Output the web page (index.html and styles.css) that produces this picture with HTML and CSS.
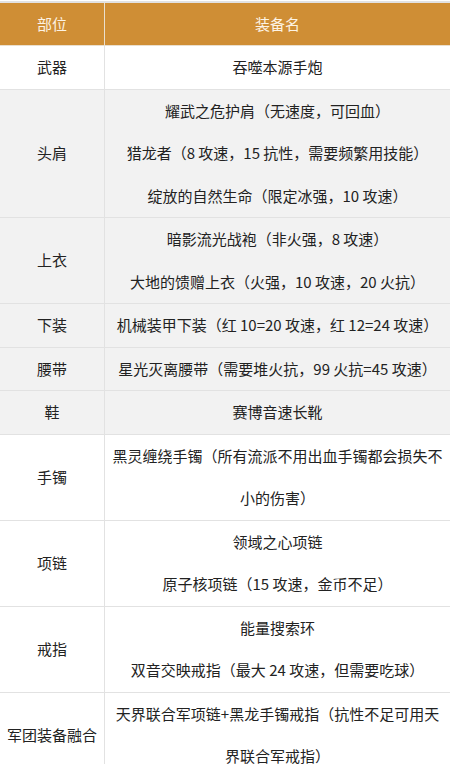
FILE: index.html
```html
<!DOCTYPE html>
<html lang="zh">
<head>
<meta charset="utf-8">
<link rel="stylesheet" href="styles.css">
</head>
<body>
<table class="gear">
  <thead>
    <tr><th class="slot">部位</th><th class="item">装备名</th></tr>
  </thead>
  <tbody>
    <tr><td class="slot">武器</td><td class="item">吞噬本源手炮</td></tr>
    <tr class="alt"><td class="slot">头肩</td><td class="item">耀武之危护肩（无速度，可回血）<br>猎龙者（8 攻速，15 抗性，需要频繁用技能）<br>绽放的自然生命（限定冰强，10 攻速）</td></tr>
    <tr class="alt"><td class="slot">上衣</td><td class="item">暗影流光战袍（非火强，8 攻速）<br>大地的馈赠上衣（火强，10 攻速，20 火抗）</td></tr>
    <tr class="alt"><td class="slot">下装</td><td class="item">机械装甲下装（红 10=20 攻速，红 12=24 攻速）</td></tr>
    <tr class="alt"><td class="slot">腰带</td><td class="item">星光灭离腰带（需要堆火抗，99 火抗=45 攻速）</td></tr>
    <tr class="alt"><td class="slot">鞋</td><td class="item">赛博音速长靴</td></tr>
    <tr><td class="slot">手镯</td><td class="item">黑灵缠绕手镯（所有流派不用出血手镯都会损失不小的伤害）</td></tr>
    <tr><td class="slot">项链</td><td class="item">领域之心项链<br>原子核项链（15 攻速，金币不足）</td></tr>
    <tr><td class="slot">戒指</td><td class="item">能量搜索环<br>双音交映戒指（最大 24 攻速，但需要吃球）</td></tr>
    <tr><td class="slot">军团装备融合</td><td class="item">天界联合军项链+黑龙手镯戒指（抗性不足可用天界联合军戒指）</td></tr>
  </tbody>
</table>
</body>
</html>
```

FILE: styles.css
```css
html, body {
  margin: 0;
  padding: 0;
  background: #ffffff;
}
body {
  padding-top: 1px;
  font-family: "Noto Sans CJK SC", "Noto Sans", sans-serif;
  font-size: 15px;
  color: #222222;
}
.gear {
  width: 100%;
  border-collapse: collapse;
  border-top: 2px solid #e2e2e2;
}
.gear th, .gear td {
  border: 1px solid #e2e2e2;
  text-align: center;
  vertical-align: middle;
  padding: 0 6px;
  line-height: 42.5px;
  font-weight: normal;
}
.gear tr > :first-child { border-left: none; }
.gear tr > :last-child { border-right: none; }
.gear th {
  background: #cf8e35;
  color: #fdf3e4;
  line-height: 42px;
  border-color: #eadfce;
}
.gear .slot {
  width: 92px;
  padding: 0 6px;
}
.gear tr.alt td {
  background: #f2f2f2;
}
```
